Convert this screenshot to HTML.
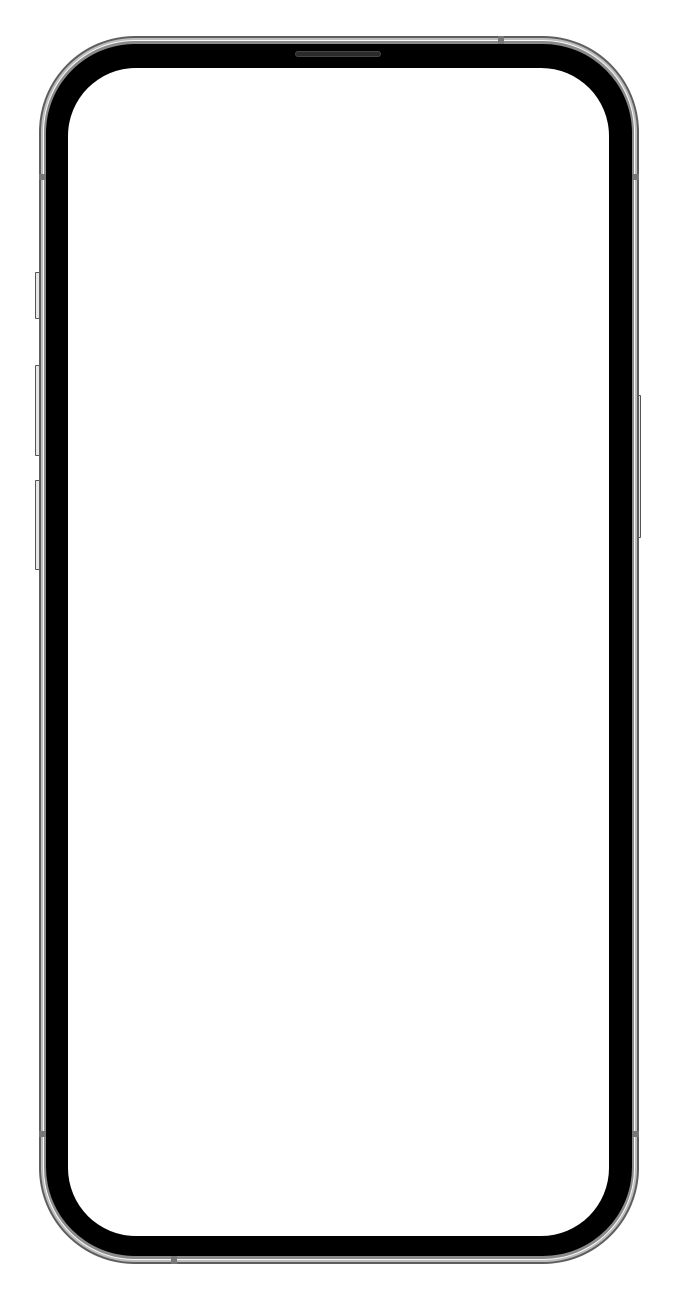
<!DOCTYPE html>
<html><head><style>
html,body{margin:0;padding:0;background:#fff;width:695px;height:1316px;overflow:hidden;position:relative}
div{position:absolute;box-sizing:border-box}
.btn{background:#e8e8e8;border:1px solid #555;border-radius:1px}
</style></head><body>
<div class="btn" style="left:35px;top:272px;width:5px;height:47px"></div>
<div class="btn" style="left:35px;top:365px;width:5px;height:91px"></div>
<div class="btn" style="left:35px;top:480px;width:5px;height:90px"></div>
<div class="btn" style="left:636px;top:395px;width:5px;height:143px"></div>
<div style="left:39px;top:36px;width:600px;height:1228px;border-radius:96px;background:#5e5e5e"></div>
<div style="left:41px;top:38px;width:596px;height:1224px;border-radius:94px;background:#bdbdbd"></div>
<div style="left:43px;top:40px;width:592px;height:1220px;border-radius:92px;background:#fafafa"></div>
<div style="left:44px;top:41px;width:590px;height:1218px;border-radius:91px;background:#8a8a8a"></div>
<div style="left:46px;top:44px;width:586px;height:1212px;border-radius:89px;background:#000"></div>
<div style="left:68px;top:68px;width:541px;height:1168px;border-radius:68px;background:#fff"></div>
<div style="left:295px;top:51px;width:86px;height:6px;border-radius:3px;background:#2a2a2a;border:1px solid #444"></div>
<div style="left:498px;top:36px;width:6px;height:8px;background:#777"></div>
<div style="left:171px;top:1256px;width:6px;height:8px;background:#777"></div>
<div style="left:39px;top:174px;width:7px;height:6px;background:#777"></div>
<div style="left:632px;top:174px;width:7px;height:6px;background:#777"></div>
<div style="left:39px;top:1131px;width:7px;height:6px;background:#777"></div>
<div style="left:632px;top:1131px;width:7px;height:6px;background:#777"></div>
</body></html>
